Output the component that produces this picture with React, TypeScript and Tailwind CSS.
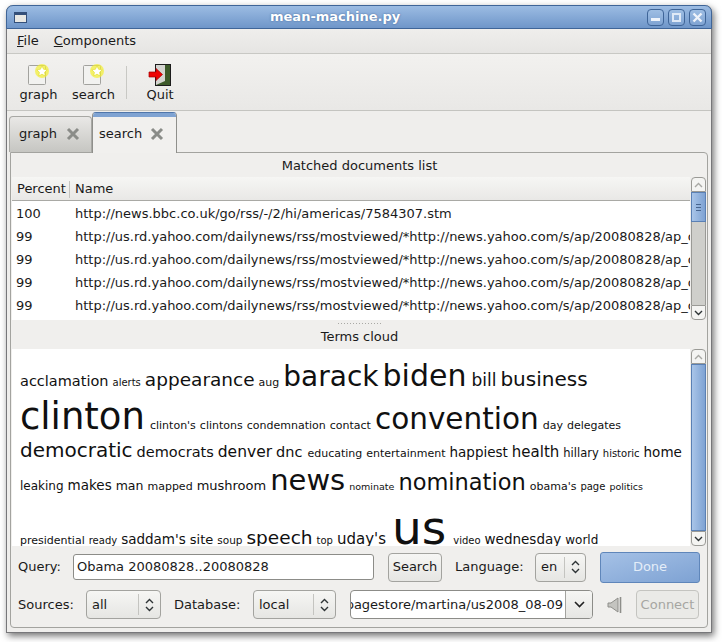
const urlLong = 'http://us.rd.yahoo.com/dailynews/rss/mostviewed/*http://news.yahoo.com/s/ap/20080828/ap_on_el_pr/cvn_obama';

const rows = [
  ['100', 'http://news.bbc.co.uk/go/rss/-/2/hi/americas/7584307.stm'],
  ['99', urlLong],
  ['99', urlLong],
  ['99', urlLong],
  ['99', urlLong],
];

const cloud: { h: string; words: [string, string][] }[] = [
  {
    h: 'h-[41px]',
    words: [
      ['acclamation', 'text-[14.5px]'], ['alerts', 'text-[10px]'], ['appearance', 'text-[18.5px]'], ['aug', 'text-[11px]'],
      ['barack', 'text-[28px]'], ['biden', 'text-[30px]'], ['bill', 'text-[17px] ml-px'], ['business', 'text-[20px]'],
    ],
  },
  {
    h: 'h-[44px]',
    words: [
      ['clinton', 'text-[37px]'], ["clinton's", 'text-[11px] ml-px'], ['clintons', 'text-[11px]'], ['condemnation', 'text-[11px]'],
      ['contact', 'text-[11px]'], ['convention', 'text-[29.5px]'], ['day', 'text-[11px]'], ['delegates', 'text-[11px]'],
    ],
  },
  {
    h: 'h-[25px]',
    words: [
      ['democratic', 'text-[20px]'], ['democrats', 'text-[14.5px]'], ['denver', 'text-[15.5px]'], ['dnc', 'text-[14.5px]'],
      ['educating', 'text-[11px] ml-px'], ['entertainment', 'text-[11px]'], ['happiest', 'text-[13.5px]'], ['health', 'text-[15px]'],
      ['hillary', 'text-[11.5px]'], ['historic', 'text-[10px]'], ['home', 'text-[13.5px]'],
    ],
  },
  {
    h: 'h-[35px]',
    words: [
      ['leaking', 'text-[12px]'], ['makes', 'text-[13.5px]'], ['man', 'text-[12.5px]'], ['mapped', 'text-[11px]'],
      ['mushroom', 'text-[13px]'], ['news', 'text-[29px]'], ['nominate', 'text-[9.5px]'], ['nomination', 'text-[22.5px]'],
      ["obama's", 'text-[11px]'], ['page', 'text-[10px]'], ['politics', 'text-[9.5px]'],
    ],
  },
  {
    h: 'h-[56px]',
    words: [
      ['presidential', 'text-[11px]'], ['ready', 'text-[10px]'], ["saddam's", 'text-[13.5px]'], ['site', 'text-[13px]'],
      ['soup', 'text-[10.5px]'], ['speech', 'text-[18.5px]'], ['top', 'text-[10px]'], ["uday's", 'text-[15px]'],
      ['us', 'text-[47px] ml-[2px] mr-[2px]'], ['video', 'text-[10px] ml-px'], ['wednesday', 'text-[13.5px]'], ['world', 'text-[12px]'],
    ],
  },
];

function DocIcon() {
  return (
    <svg width="24" height="24" viewBox="0 0 24 24">
      <path d="M2.5 3.5h15a1 1 0 0 1 1 1v17a1 1 0 0 1-1 1h-15a1 1 0 0 1-1-1v-17a1 1 0 0 1 1-1z" fill="#f2f2f0" stroke="#a2a29e" />
      <circle cx="15" cy="9" r="7" fill="#f4f030" opacity="0.7" />
      <path d="M15 4l1.6 3.3 3.6.5-2.6 2.5.6 3.6-3.2-1.7-3.2 1.7.6-3.6-2.6-2.5 3.6-.5z" fill="#ffffff" stroke="#e0dc20" strokeWidth="0.6" />
    </svg>
  );
}

function QuitIcon() {
  return (
    <svg width="24" height="24" viewBox="0 0 24 24">
      <rect x="7.5" y="2.5" width="15" height="21" fill="#3d5a2a" stroke="#1c1c1c" />
      <path d="M8 3h9v16l-9 4z" fill="#d4d4d0" />
      <path d="M1 10h7V6.5l6.5 6-6.5 6V15H1z" fill="#ee0606" stroke="#a00000" strokeWidth="0.7" />
    </svg>
  );
}

function Chevron({ up, color = '#2e3436' }: { up?: boolean; color?: string }) {
  return (
    <svg width="9" height="6" viewBox="0 0 9 6">
      <path d={up ? 'M1 5l3.5-3.5L8 5' : 'M1 1l3.5 3.5L8 1'} fill="none" stroke={color} strokeWidth="1.4" />
    </svg>
  );
}

function TabClose() {
  return (
    <svg width="14" height="14" viewBox="0 0 14 14">
      <path d="M2 2l10 10M12 2L2 12" stroke="#8a8c88" strokeWidth="3" />
    </svg>
  );
}

function WinButton({ children }: { children: React.ReactNode }) {
  return (
    <div className="flex h-[17px] w-[17px] items-center justify-center rounded-[4px] border border-[#3f6598] bg-gradient-to-b from-[#9dbde3] to-[#7fa3d2]">
      {children}
    </div>
  );
}

function Scrollbar({ thumbH, lines }: { thumbH: string; lines?: boolean }) {
  return (
    <div className="ml-px flex w-[15px] flex-col">
      <div className="flex h-[15px] shrink-0 items-center justify-center rounded-t-[4px] border border-[#9a9a96] bg-[#f4f4f2]">
        <Chevron up color="#a8a8a4" />
      </div>
      <div className="flex-1 border-x border-[#9a9a96] bg-[#cfcfcb]">
        <div className={`${thumbH} -mx-px flex items-center justify-center border border-[#5a80b4] bg-gradient-to-r from-[#a9c5e8] to-[#7ea2d3]`}>
          {lines && <div className="h-[7px] w-[5px] border-y border-[#48668f] bg-[linear-gradient(#48668f,#48668f)] bg-[length:100%_1px] bg-center bg-no-repeat" />}
        </div>
      </div>
      <div className="flex h-[15px] shrink-0 items-center justify-center rounded-b-[4px] border border-[#9a9a96] bg-[#f4f4f2]">
        <Chevron />
      </div>
    </div>
  );
}

function Combo({ label, className, textW }: { label: string; className: string; textW: string }) {
  return (
    <div className={`${className} flex h-[29px] items-center rounded-[4px] border border-[#a3a39f] bg-gradient-to-b from-[#f6f6f4] to-[#e6e6e3]`}>
      <span className={`${textW} pl-[5px]`}>{label}</span>
      <div className="h-[21px] w-px bg-[#c4c4c0]" />
      <div className="flex flex-1 flex-col items-center gap-[2px]">
        <Chevron up />
        <Chevron />
      </div>
    </div>
  );
}

export default function App() {
  return (
    <div className="h-[642px] w-[722px] overflow-hidden bg-white pl-[6px] pt-[5px] font-['DejaVu_Sans',sans-serif] text-[13px] text-[#1a1a1a]">
      <div className="flex h-[628px] w-[706px] flex-col rounded-t-[7px] border-x border-b border-[#77777a] bg-[#efeeec] shadow-[2px_3px_7px_rgba(0,0,0,0.55)]">
        {/* Title bar */}
        <div className="relative -mx-px flex h-[24px] shrink-0 items-center justify-between rounded-t-[7px] border border-[#3f6598] bg-gradient-to-b from-[#9cbce3] to-[#6f96c9] pl-[7px] pr-[5px]">
          <div className="h-[11px] w-[13px] border border-[#34507a] border-t-[3px] bg-[#e8e8e4]" />
          <div className="absolute left-[263px] top-0 text-[13px] font-bold leading-[22px] text-white [text-shadow:0_0_2px_#3f6598]">
            mean-machine.py
          </div>
          <div className="flex gap-[4px]">
            <WinButton>
              <div className="mt-[5px] h-[3px] w-[9px] bg-[#eef3fa]" />
            </WinButton>
            <WinButton>
              <div className="h-[9px] w-[9px] border-2 border-[#dfe9f6]" />
            </WinButton>
            <WinButton>
              <svg width="11" height="11" viewBox="0 0 11 11">
                <path d="M1.5 1.5l8 8M9.5 1.5l-8 8" stroke="#eef3fa" strokeWidth="2.4" />
              </svg>
            </WinButton>
          </div>
        </div>

        {/* Menu */}
        <div className="flex h-[25px] shrink-0 items-center gap-[15px] border-b border-[#c8c8c4] bg-gradient-to-b from-[#efeeec] to-[#e6e5e3] pl-[10px]">
          <span><span className="underline">F</span>ile</span>
          <span><span className="underline">C</span>omponents</span>
        </div>

        {/* Toolbar */}
        <div className="flex h-[57px] shrink-0 items-center border-b border-[#c4c4c0] bg-gradient-to-b from-[#f2f1ef] to-[#e9e8e6] pl-[4px]">
          <div className="flex w-[55px] flex-col items-center"><DocIcon /><span className="leading-[17px]">graph</span></div>
          <div className="flex w-[55px] flex-col items-center"><DocIcon /><span className="leading-[17px]">search</span></div>
          <div className="mx-[5px] h-[33px] w-px bg-[#c8c8c4]" />
          <div className="flex w-[56px] flex-col items-center"><QuitIcon /><span className="leading-[17px]">Quit</span></div>
        </div>

        {/* Tabs */}
        <div className="flex h-[41px] shrink-0 items-end pl-[2px]">
          <div className="flex h-[36px] w-[83px] items-center justify-between rounded-t-[4px] border border-b-0 border-[#a8a8a4] bg-gradient-to-b from-[#e9e8e6] to-[#c6c6c2] pb-px pl-[9px] pr-[11px]">
            graph<TabClose />
          </div>
          <div className="z-10 -mb-px flex h-[41px] w-[85px] flex-col rounded-t-[4px] border border-b-0 border-[#8f8f8b] border-t-[#4f76aa] bg-[#f1f0ee]">
            <div className="h-[4px] shrink-0 rounded-t-[3px] bg-[#7fa3d2]" />
            <div className="flex flex-1 items-center justify-between pb-[2px] pl-[6px] pr-[12px]">search<TabClose /></div>
          </div>
        </div>

        {/* Notebook page */}
        <div className="mx-[3px] flex h-[476px] flex-col rounded-b-[4px] rounded-tr-[4px] border border-[#a3a39f] bg-[#f0efed] pl-px">
          <div className="flex h-[24px] shrink-0 items-center justify-center pt-px">Matched documents list</div>

          <div className="flex h-[143px] shrink-0">
            <div className="w-[678px] overflow-hidden bg-white">
              <div className="flex h-[24px] items-center border-b border-[#a9a9a5] bg-gradient-to-b from-[#f6f6f4] to-[#e9e8e6] pt-px">
                <div className="flex h-[17px] w-[58px] items-center border-r border-[#c4c4c0] pl-[5px]">Percent</div>
                <div className="pl-[5px]">Name</div>
              </div>
              {rows.map((r, i) => (
                <div key={i} className="flex h-[23px] items-center whitespace-nowrap pt-[2px]">
                  <div className="w-[63px] shrink-0 pl-[4px]">{r[0]}</div>
                  <div>{r[1]}</div>
                </div>
              ))}
            </div>
            <Scrollbar thumbH="h-[30px]" lines />
          </div>

          <div className="flex h-[6px] shrink-0 items-center justify-center">
            <div className="h-[3px] w-[46px] bg-[radial-gradient(#a9a9a5_0.6px,transparent_0.7px)] bg-[length:3px_3px]" />
          </div>
          <div className="flex h-[23px] shrink-0 items-center justify-center pb-px">Terms cloud</div>

          <div className="flex h-[197px] shrink-0">
            <div className="w-[678px] overflow-hidden bg-white pl-[8px] pt-[1px] text-[#101010]">
              {cloud.map((line, i) => (
                <div key={i} className={`${line.h} flex items-end whitespace-pre`}>
                  <div className="flex items-baseline gap-x-[4px] leading-none">
                    {line.words.map(([w, size]) => (
                      <span key={w} className={size}>{w}</span>
                    ))}
                  </div>
                </div>
              ))}
            </div>
            <Scrollbar thumbH="h-[167px]" />
          </div>

          {/* Query row */}
          <div className="flex h-[42px] shrink-0 items-center pl-[6px]">
            <span className="w-[55px]">Query:</span>
            <div className="flex h-[26px] w-[301px] items-center rounded-[3px] border border-[#8c8c88] bg-white pl-[3px]">Obama 20080828..20080828</div>
            <div className="ml-[14px] flex h-[29px] w-[54px] items-center justify-center rounded-[4px] border border-[#a3a39f] bg-gradient-to-b from-[#f6f6f4] to-[#e6e6e3]">Search</div>
            <span className="ml-[13px] w-[80px]">Language:</span>
            <Combo label="en" className="w-[51px]" textW="w-[28px]" />
            <div className="ml-[14px] flex h-[31px] w-[100px] items-center justify-center rounded-[3px] border border-[#5f86ba] bg-gradient-to-br from-[#a5c1e6] to-[#7ea2d3] text-[#e4edf8]">Done</div>
          </div>

          {/* Sources row */}
          <div className="mt-[2px] flex h-[29px] shrink-0 items-center pl-[6px]">
            <span className="w-[68px]">Sources:</span>
            <Combo label="all" className="w-[75px]" textW="w-[51px]" />
            <span className="ml-[13px] w-[79px]">Database:</span>
            <Combo label="local" className="w-[83px]" textW="w-[59px]" />
            <div className="ml-[14px] flex h-[29px] w-[243px] items-center overflow-hidden rounded-[4px] border border-[#8c8c88] bg-white">
              <div className="flex w-[214px] shrink-0 justify-end overflow-hidden whitespace-nowrap pr-[2px]">
                <span className="shrink-0">/home/pagestore/martina/us2008_08-09</span>
              </div>
              <div className="flex h-full flex-1 items-center justify-center border-l border-[#a3a39f] bg-gradient-to-b from-[#f6f6f4] to-[#e6e6e3]">
                <svg width="11" height="7" viewBox="0 0 11 7"><path d="M1 1l4.5 4.5L10 1" fill="none" stroke="#222" strokeWidth="1.6" /></svg>
              </div>
            </div>
            <svg width="18" height="18" viewBox="0 0 18 18" className="ml-[14px]">
              <path d="M1 7h3l7-5v14l-7-5H1z" fill="#c4c4c0" stroke="#8e8e8a" />
              <path d="M13.5 1v16" stroke="#8e8e8a" strokeWidth="1.6" />
            </svg>
            <div className="ml-[11px] flex h-[29px] w-[63px] items-center justify-center rounded-[4px] border border-[#c4c4c0] bg-[#eaeae7] text-[#a6a6a2]">Connect</div>
          </div>
        </div>
      </div>
    </div>
  );
}
